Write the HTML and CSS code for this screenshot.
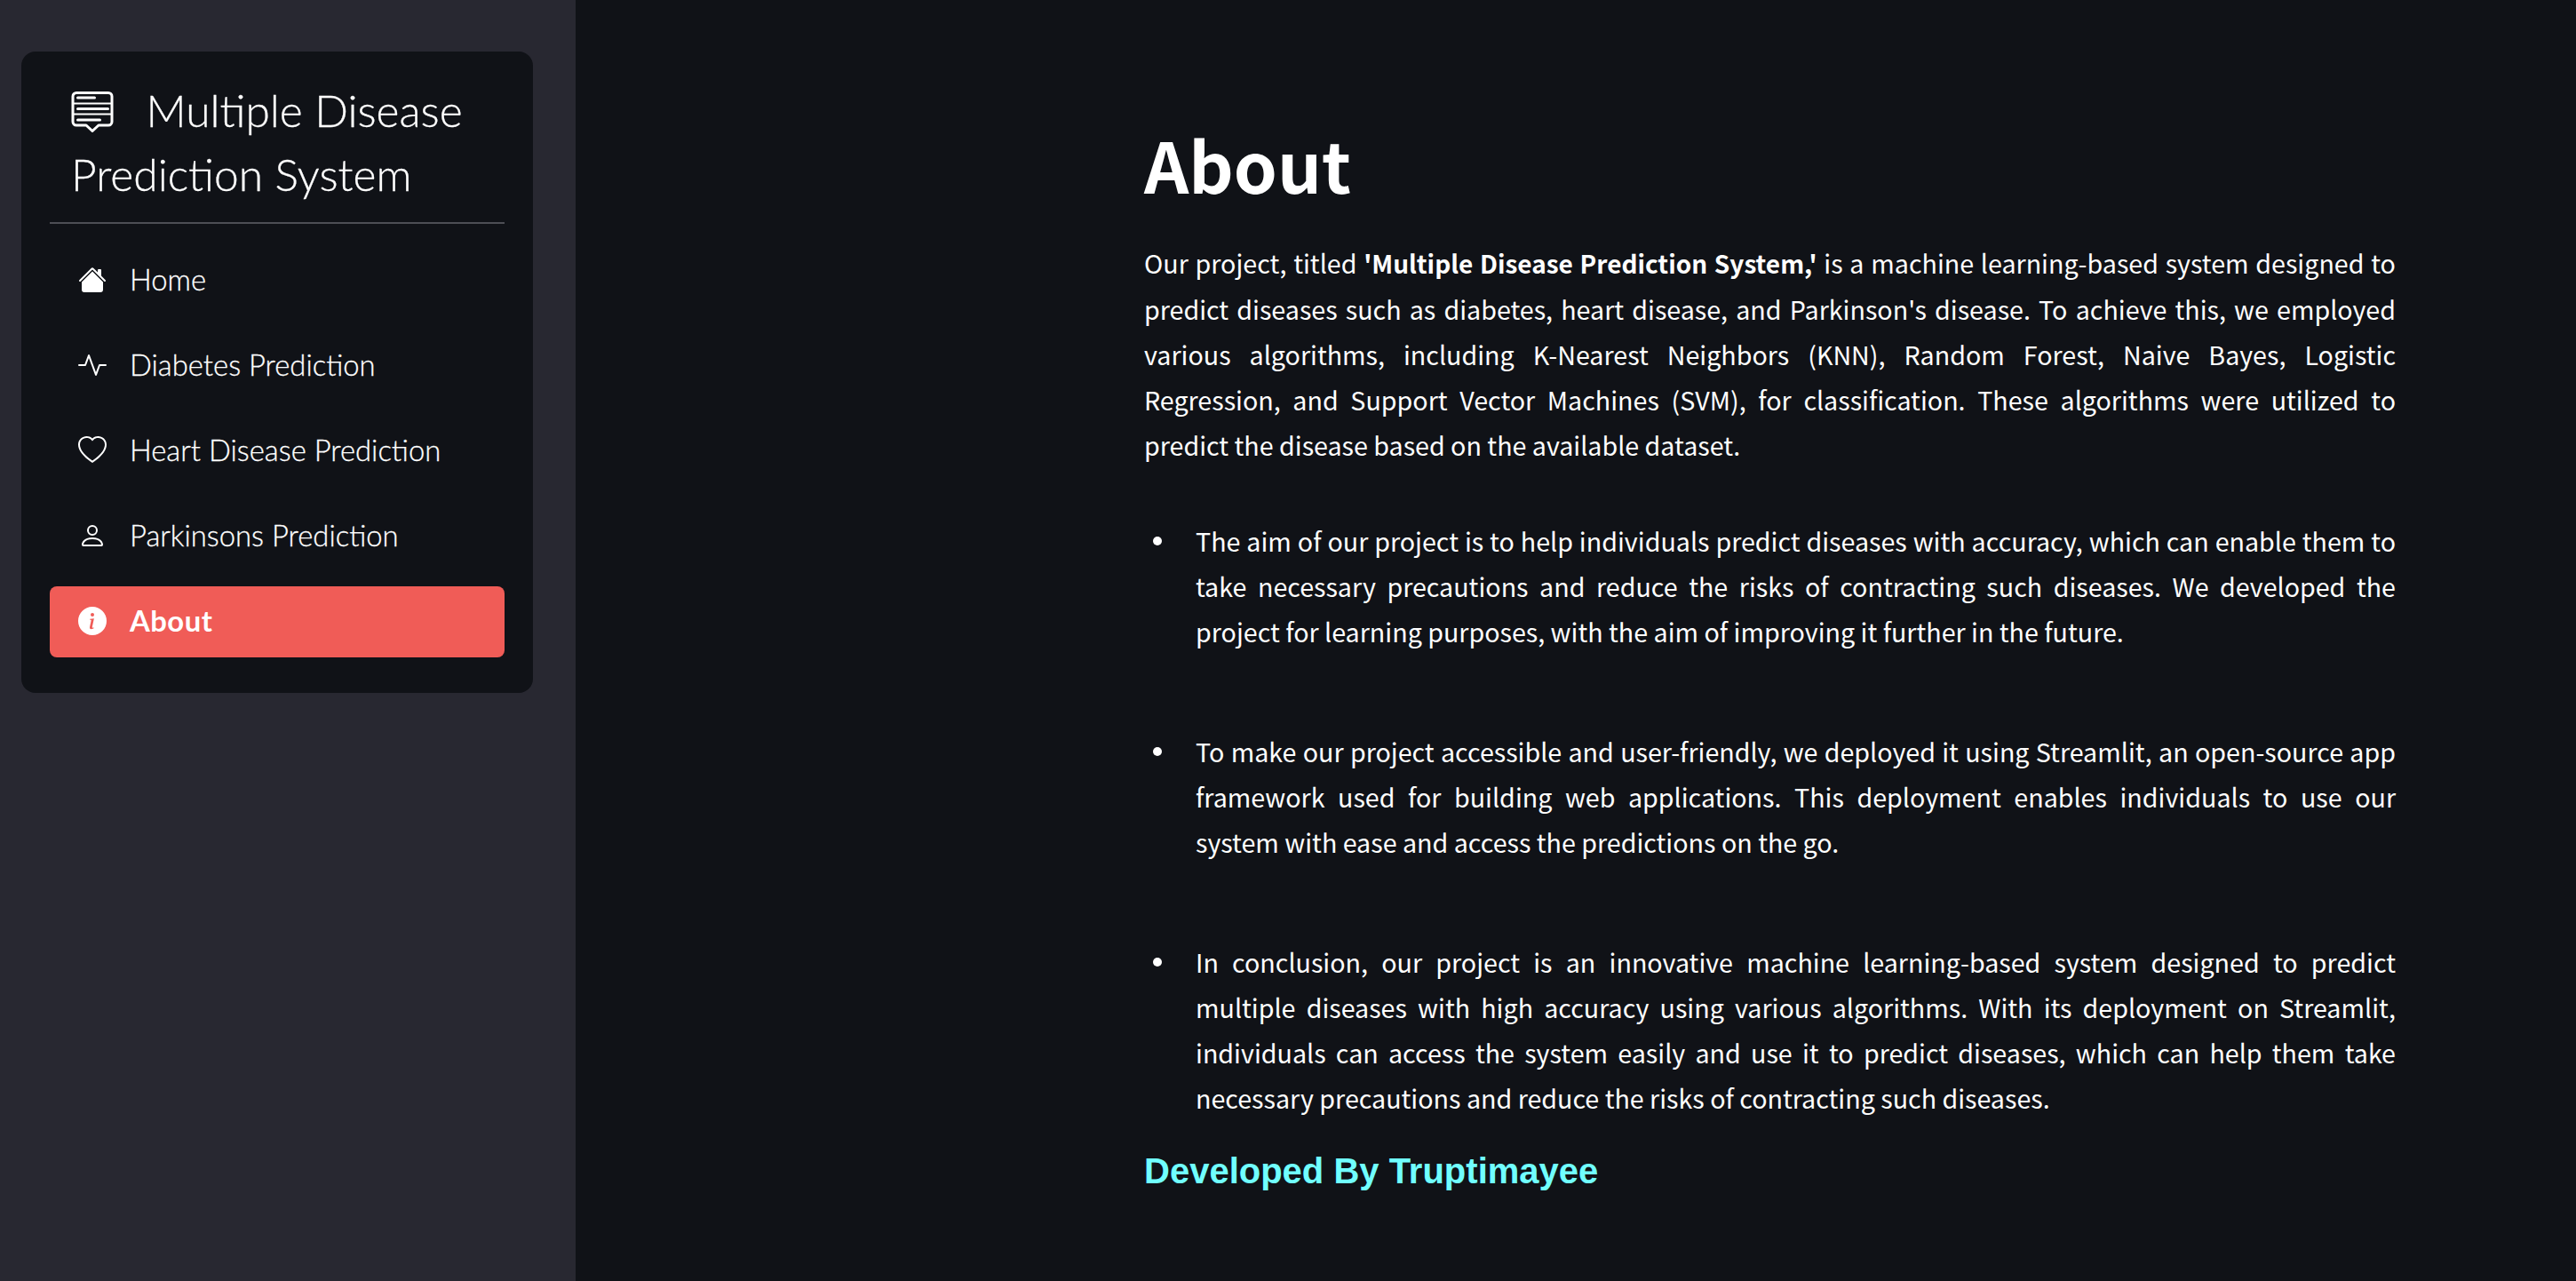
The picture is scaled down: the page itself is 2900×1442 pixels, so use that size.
FILE: index.html
```html
<!DOCTYPE html>
<html lang="en">
<head>
    <meta charset="UTF-8">
    <title>Multiple Disease Prediction System</title>
    <link rel="stylesheet" href="styles.css">
</head>
<body>
    <aside class="sidebar">
        <nav class="menu-card">
            <div class="menu-title">
                <svg class="title-icon" viewBox="0 0 48 46" fill="none" stroke="#fff" stroke-width="3" stroke-linecap="round" stroke-linejoin="round">
                    <path d="M6 1.500h36a4 4 0 0 1 4 4V34a4 4 0 0 1-4 4H31l-7 6.500-7-6.500H6a4 4 0 0 1-4-4V5.500a4 4 0 0 1 4-4z"/>
                    <path stroke-width="2" d="M2 13.500h44M2 25.500h44"/>
                    <path d="M7.500 7h19M7.500 19.500h34M7.500 32h25"/>
                </svg>
                <span class="title-text">Multiple Disease Prediction System</span>
            </div>
            <hr class="menu-line">
            <ul class="menu-list">
                <li class="menu-item">
                    <svg class="menu-icon" viewBox="0 0 16 16" fill="#fff"><path d="M8.707 1.500a1 1 0 0 0-1.414 0L.646 8.146a.5.5 0 0 0 .708.708L8 2.207l6.646 6.647a.5.5 0 0 0 .708-.708L13 5.793V2.500a.5.5 0 0 0-.5-.5h-1a.5.5 0 0 0-.5.5v1.293L8.707 1.500z"/><path d="m8 3.293 6 6V13.500a1.500 1.500 0 0 1-1.500 1.500h-9A1.500 1.500 0 0 1 2 13.500V9.293l6-6z"/></svg>
                    Home
                </li>
                <li class="menu-item">
                    <svg class="menu-icon" viewBox="0 0 16 16" fill="#fff"><path fill-rule="evenodd" d="M6 2a.5.5 0 0 1 .47.330L10 12.036l1.530-4.208A.5.5 0 0 1 12 7.500h3.500a.5.5 0 0 1 0 1h-3.150l-1.880 5.170a.5.5 0 0 1-.94 0L6 3.964 4.470 8.171A.5.5 0 0 1 4 8.500H.5a.5.5 0 0 1 0-1h3.150l1.880-5.170A.5.5 0 0 1 6 2z"/></svg>
                    Diabetes Prediction
                </li>
                <li class="menu-item">
                    <svg class="menu-icon" viewBox="0 0 16 16" fill="#fff"><path d="m8 2.748-.717-.737C5.600.281 2.514.878 1.400 3.053c-.523 1.023-.641 2.500.314 4.385.920 1.815 2.834 3.989 6.286 6.357 3.452-2.368 5.365-4.542 6.286-6.357.955-1.886.838-3.362.314-4.385C13.486.878 10.400.280 8.717 2.010L8 2.748zM8 15C-7.333 4.868 3.279-3.040 7.824 1.143c.060.055.119.112.176.171a3.120 3.120 0 0 1 .176-.170C12.720-3.042 23.333 4.867 8 15z"/></svg>
                    Heart Disease Prediction
                </li>
                <li class="menu-item">
                    <svg class="menu-icon" viewBox="0 0 16 16" fill="#fff"><path d="M8 8a3 3 0 1 0 0-6 3 3 0 0 0 0 6zm2-3a2 2 0 1 1-4 0 2 2 0 0 1 4 0zm4 8c0 1-1 1-1 1H3s-1 0-1-1 1-4 6-4 6 3 6 4zm-1-.004c-.001-.246-.154-.986-.832-1.664C11.516 10.680 10.289 10 8 10c-2.290 0-3.516.680-4.168 1.332-.678.678-.830 1.418-.832 1.664h10z"/></svg>
                    Parkinsons Prediction
                </li>
                <li class="menu-item active">
                    <svg class="menu-icon" viewBox="0 0 16 16" fill="#fff"><path d="M8 16A8 8 0 1 0 8 0a8 8 0 0 0 0 16zm.930-9.412-1 4.705c-.070.340.029.533.304.533.194 0 .487-.070.686-.246l-.088.416c-.287.346-.920.598-1.465.598-.703 0-1.002-.422-.808-1.319l.738-3.468c.064-.293.006-.399-.287-.470l-.451-.081.082-.381 2.290-.287zM8 5.500a1 1 0 1 1 0-2 1 1 0 0 1 0 2z"/></svg>
                    About
                </li>
            </ul>
        </nav>
    </aside>

    <main class="content">
        <h1>About</h1>
        <p>Our project, titled <strong>'Multiple Disease Prediction System,'</strong> is a machine learning-based system designed to predict diseases such as diabetes, heart disease, and Parkinson's disease. To achieve this, we employed various algorithms, including K-Nearest Neighbors (KNN), Random Forest, Naive Bayes, Logistic Regression, and Support Vector Machines (SVM), for classification. These algorithms were utilized to predict the disease based on the available dataset.</p>
        <ul class="points">
            <li>The aim of our project is to help individuals predict diseases with accuracy, which can enable them to take necessary precautions and reduce the risks of contracting such diseases. We developed the project for learning purposes, with the aim of improving it further in the future.</li>
            <li>To make our project accessible and user-friendly, we deployed it using Streamlit, an open-source app framework used for building web applications. This deployment enables individuals to use our system with ease and access the predictions on the go.</li>
            <li>In conclusion, our project is an innovative machine learning-based system designed to predict multiple diseases with high accuracy using various algorithms. With its deployment on Streamlit, individuals can access the system easily and use it to predict diseases, which can help them take necessary precautions and reduce the risks of contracting such diseases.</li>
        </ul>
        <div class="credit">Developed By Truptimayee</div>
    </main>
</body>
</html>
```

FILE: styles.css
```css
html, body {
    height: 100%;
}
body {
    margin: 0;
    display: flex;
    height: 100vh;
    overflow: hidden;
    background-color: #101217;
    color: #fff;
    font-family: "Noto Sans CJK SC", "Noto Sans", sans-serif;
}
.sidebar {
    width: 648px;
    flex-shrink: 0;
    box-sizing: border-box;
    padding: 58px 48px 0 24px;
    background-color: #282831;
}
.menu-card {
    height: 722px;
    box-sizing: border-box;
    padding: 30px 32px 32px;
    border-radius: 16px;
    background-color: #101217;
    font-family: Lato, sans-serif;
}
.menu-title {
    padding: 0 24px;
    font-size: 49.700px;
    font-weight: 300;
    line-height: 72px;
    -webkit-text-stroke: 0.300px #fff;
}
.title-icon {
    display: inline-block;
    width: 48px;
    height: 46px;
    margin-right: 23px;
    vertical-align: -6px;
}
.menu-line {
    height: 2px;
    margin: 18px 0 24px;
    border: 0;
    background-color: #4d4e55;
}
.menu-list {
    list-style: none;
    margin: 0;
    padding: 0;
    display: flex;
    flex-direction: column;
    gap: 16px;
}
.menu-item {
    display: flex;
    align-items: center;
    box-sizing: border-box;
    height: 80px;
    padding: 0 32px 3px;
    gap: 26px;
    border-radius: 8px;
    font-size: 32.800px;
    font-weight: 300;
    -webkit-text-stroke: 0.300px #fff;
}
.menu-icon {
    width: 32px;
    height: 32px;
    flex-shrink: 0;
}
.active {
    background-color: #f05c57;
    font-weight: 700;
    letter-spacing: 0.500px;
    -webkit-text-stroke: 0;
}
.content {
    box-sizing: border-box;
    width: 1409px;
    margin-left: 640px;
    padding-top: 158px;
    font-size: 28.650px;
    line-height: 51px;
}
h1 {
    margin: 0 0 59px;
    font-size: 78.500px;
    font-weight: 700;
    line-height: 53px;
}
p {
    margin: 0 0 57px;
    text-align: justify;
}
strong {
    font-size: 28px;
}
.points {
    list-style: none;
    margin: 0;
    padding-left: 58px;
    text-align: justify;
}
.points li {
    position: relative;
    margin-bottom: 84px;
}
.points li::before {
    content: "";
    position: absolute;
    left: -48px;
    top: 21px;
    width: 10px;
    height: 10px;
    border-radius: 50%;
    background-color: #fff;
}
.points li:last-child {
    margin-bottom: 0;
}
.credit {
    margin-top: 27px;
    color: #70ffff;
    font-family: "Liberation Sans", Arial, sans-serif;
    font-size: 40px;
    font-weight: 700;
    line-height: 60px;
}
```
